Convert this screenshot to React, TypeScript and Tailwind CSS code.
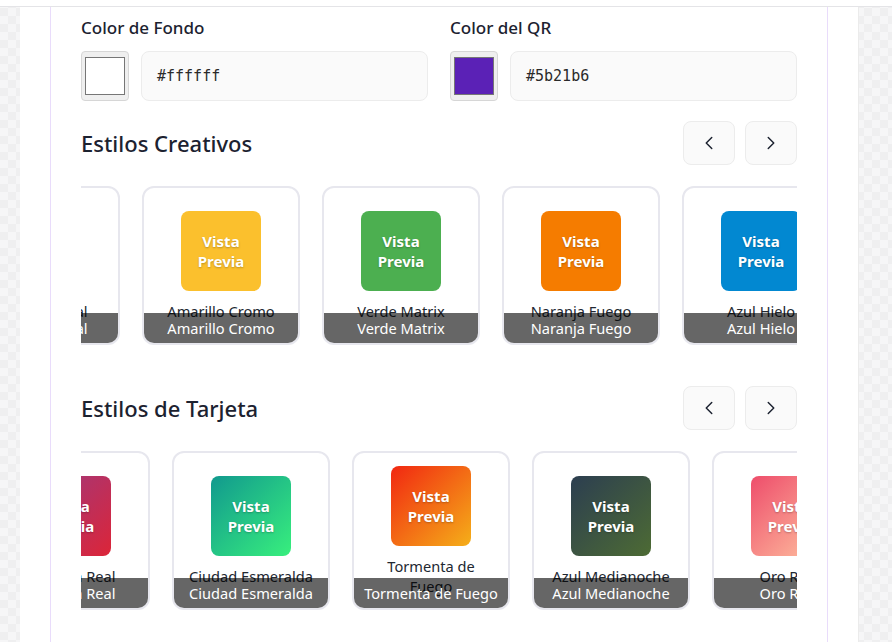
import { useState } from "react"
import { ChevronLeft, ChevronRight } from "lucide-react"

type Style = {
  name: string
  bg: string
}

const creativeStyles: Style[] = [
  { name: "Negro Clásico", bg: "bg-[#222222]" },
  { name: "Coral Tropical", bg: "bg-[#ff6f61]" },
  { name: "Amarillo Cromo", bg: "bg-[#fbc02d]" },
  { name: "Verde Matrix", bg: "bg-[#4caf50]" },
  { name: "Naranja Fuego", bg: "bg-[#f57c00]" },
  { name: "Azul Hielo", bg: "bg-[#0288d1]" },
  { name: "Rosa Neón", bg: "bg-[#e91e63]" },
]

const cardStyles: Style[] = [
  { name: "Océano Profundo", bg: "bg-[linear-gradient(135deg,#1e3c72,#2a5298)]" },
  { name: "Púrpura Real", bg: "bg-[linear-gradient(135deg,#9b3a82,#dc2538)]" },
  { name: "Ciudad Esmeralda", bg: "bg-[linear-gradient(135deg,#11998e,#38ef7d)]" },
  { name: "Tormenta de Fuego", bg: "bg-[linear-gradient(135deg,#f12711,#f5af19)]" },
  { name: "Azul Medianoche", bg: "bg-[linear-gradient(135deg,#2c3e50,#4d6b34)]" },
  { name: "Oro Rosa", bg: "bg-[linear-gradient(135deg,#ee4d6b,#ffc6a2)]" },
  { name: "Lavanda Suave", bg: "bg-[linear-gradient(135deg,#a18cd1,#fbc2eb)]" },
]

const CARD_STEP = 180

function ColorField({ label, value, swatch }: { label: string; value: string; swatch: string }) {
  return (
    <div>
      <div className="mb-[11px] text-[17px] leading-6 font-medium text-[#1c2230]">{label}</div>
      <div className="flex gap-3">
        <div className="flex h-[50px] w-12 shrink-0 rounded-[4px] border border-[#d6d6d6] bg-[#efefef] px-[3px] py-[5px]">
          <div className={`h-full w-full border border-[#767676] ${swatch}`} />
        </div>
        <div className="flex h-[50px] flex-1 items-center rounded-lg border border-[#ececec] bg-[#fafafa] pl-[15px] font-['DejaVu_Sans_Mono',monospace] text-[15px] text-[#2a2a2a]">
          {value}
        </div>
      </div>
    </div>
  )
}

function StyleCard({ item }: { item: Style }) {
  return (
    <div className="relative flex h-[159px] w-[158px] shrink-0 flex-col items-center justify-center gap-[10px] overflow-hidden rounded-xl border-2 border-[#e7e7ee] bg-white px-[14px]">
      <div
        className={`flex h-20 w-20 shrink-0 items-center justify-center rounded-lg text-center text-[15px] leading-5 font-bold text-white [text-shadow:0_1px_2px_rgba(0,0,0,0.25)] ${item.bg}`}
      >
        Vista
        <br />
        Previa
      </div>
      <div className="text-center text-[14.6px] leading-5 text-[#222831]">{item.name}</div>
      <div className="absolute inset-x-0 bottom-0 flex h-[30px] items-center justify-center bg-black/60 pt-0.5 text-[14.6px] whitespace-nowrap text-white">
        {item.name}
      </div>
    </div>
  )
}

function Carousel({ title, items, start }: { title: string; items: Style[]; start: number }) {
  const [offset, setOffset] = useState(start)
  const max = (items.length - 1) * CARD_STEP
  return (
    <section>
      <div className="mb-[21px] flex h-11 items-center justify-between">
        <h2 className="text-[22px] font-medium text-[#1c2230]">{title}</h2>
        <div className="flex gap-[10px]">
          <button
            onClick={() => setOffset((o) => Math.max(0, o - CARD_STEP))}
            className="flex h-11 w-[52px] items-center justify-center rounded-lg border border-[#ececec] bg-[#fafafa] text-[#1c2230]"
          >
            <ChevronLeft size={22} strokeWidth={1.6} />
          </button>
          <button
            onClick={() => setOffset((o) => Math.min(max, o + CARD_STEP))}
            className="flex h-11 w-[52px] items-center justify-center rounded-lg border border-[#ececec] bg-[#fafafa] text-[#1c2230]"
          >
            <ChevronRight size={22} strokeWidth={1.6} />
          </button>
        </div>
      </div>
      <div className="overflow-hidden">
        <div className="flex gap-[22px]" style={{ transform: `translateX(-${offset}px)` }}>
          {items.map((item) => (
            <StyleCard key={item.name} item={item} />
          ))}
        </div>
      </div>
    </section>
  )
}

export default function App() {
  return (
    <div className="min-h-screen bg-[#f3f3f4] bg-[image:repeating-conic-gradient(#efeff0_0_25%,#f6f6f7_0_50%)] bg-[length:16px_16px] font-['Noto_Sans','Open_Sans',sans-serif]">
      <div className="h-[7px] border-b border-[#e4e4e7] bg-white" />
      <main className="ml-5 min-h-[635px] w-[839px] border-r border-[#ebebeb] bg-white px-[30px]">
        <div className="min-h-[635px] border-x border-[#e9dcfb] px-[30px] pt-[9px]">
          <div className="grid grid-cols-2 gap-[22px]">
            <ColorField label="Color de Fondo" value="#ffffff" swatch="bg-white" />
            <ColorField label="Color del QR" value="#5b21b6" swatch="bg-[#5b21b6]" />
          </div>
          <div className="mt-5">
            <Carousel title="Estilos Creativos" items={creativeStyles} start={299} />
          </div>
          <div className="mt-[41px]">
            <Carousel title="Estilos de Tarjeta" items={cardStyles} start={269} />
          </div>
        </div>
      </main>
    </div>
  )
}
